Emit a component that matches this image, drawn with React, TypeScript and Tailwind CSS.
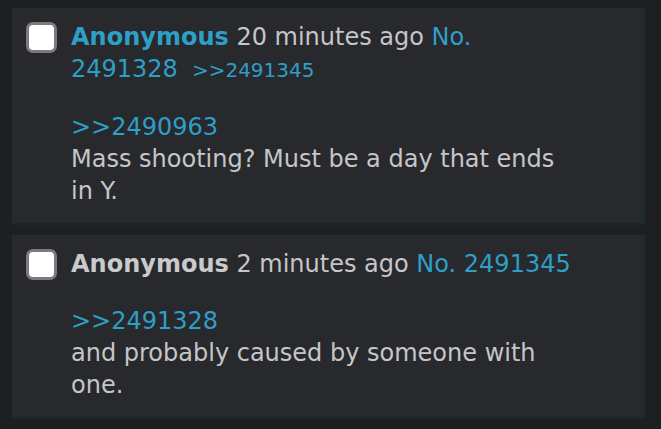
import React from 'react';

interface Post {
  no: number;
  name: string;
  nameHighlight?: boolean;
  time: string;
  backlinks: number[];
  quote: number;
  lines: string;
}

const posts: Post[] = [
  {
    no: 2491328,
    name: 'Anonymous',
    nameHighlight: true,
    time: '20 minutes ago',
    backlinks: [2491345],
    quote: 2490963,
    lines: 'Mass shooting? Must be a day that ends in Y.',
  },
  {
    no: 2491345,
    name: 'Anonymous',
    time: '2 minutes ago',
    backlinks: [],
    quote: 2491328,
    lines: 'and probably caused by someone with one.',
  },
];

const PostCard = ({ post }: { post: Post }) => (
  <div className="flex bg-[#28292d] pl-[14px] pt-[13px] pb-[16px] border-r-2 border-b-2 border-[#13292a]">
    {/* checkbox */}
    <div className="mt-[1px] w-[31px] h-[31px] shrink-0 rounded-[7px] border-[3px] border-[#7b7b7d] bg-white" />

    <div className="ml-[14px] w-[508px] text-[24px] leading-[32px] text-[#c5c6c7]">
      <div>
        <span className={post.nameHighlight ? 'font-bold text-[#2e9fc6]' : 'font-bold text-[#c9cacb]'}>
          {post.name}
        </span>{' '}
        {post.time} <span className="text-[#2e9fc6]">No. {post.no}</span>
        {post.backlinks.map((b) => (
          <span key={b} className="ml-[14px] text-[20px] text-[#2e9fc6]">
            &gt;&gt;{b}
          </span>
        ))}
      </div>

      <div className="mt-[25px]">
        <div className="text-[#2e9fc6]">&gt;&gt;{post.quote}</div>
        <div>{post.lines}</div>
      </div>
    </div>
  </div>
);

export default function App() {
  return (
    <div
      className="min-h-[429px] bg-[#1e1f21] pt-[8px] pl-[12px] pr-[15px]"
      style={{ fontFamily: '"DejaVu Sans", Verdana, sans-serif' }}
    >
      <div className="flex flex-col gap-[10px]">
        {posts.map((p) => (
          <PostCard key={p.no} post={p} />
        ))}
      </div>
    </div>
  );
}
